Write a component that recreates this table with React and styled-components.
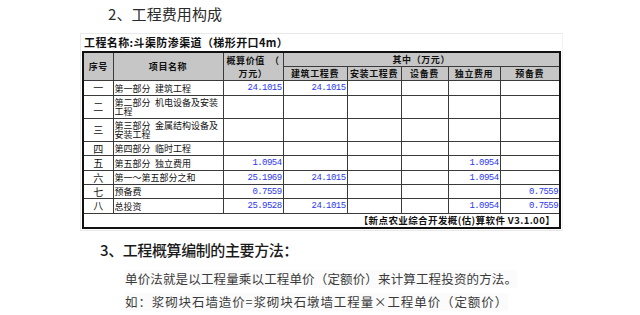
import React from "react"
import styled, { createGlobalStyle } from "styled-components"

const GlobalStyle = createGlobalStyle`
  body {
    margin: 0;
    background: #fff;
    font-family: "Noto Sans CJK SC", sans-serif;
  }
`

const _rows = [
  { no: "一", name: "第一部分\u2002建筑工程", total: "24.1015", build: "24.1015", h: 14 },
  { no: "二", name: "第二部分\u2002机电设备及安装工程", h: 22 },
  { no: "三", name: "第三部分\u2002金属结构设备及安装工程", h: 22 },
  { no: "四", name: "第四部分\u2002临时工程", h: 13 },
  { no: "五", name: "第五部分\u2002独立费用", total: "1.0954", indep: "1.0954", h: 14 },
  { no: "六", name: "第一～第五部分之和", total: "25.1969", build: "24.1015", indep: "1.0954", h: 13 },
  { no: "七", name: "预备费", total: "0.7559", reserve: "0.7559", h: 13 },
  { no: "八", name: "总投资", total: "25.9528", build: "24.1015", indep: "1.0954", reserve: "0.7559", h: 14 },
]

const _subHeads = ["建筑工程费", "安装工程费", "设备费", "独立费用", "预备费"]

const App = () => {
  return (
    <Page>
      <GlobalStyle />
      <SectionTitle>2、工程费用构成</SectionTitle>
      <Frame>
        <ProjectName>工程名称:斗渠防渗渠道（梯形开口4m）</ProjectName>
        <CostTable>
          <colgroup>
            <col style={{ width: 30 }} />
            <col style={{ width: 110 }} />
            <col style={{ width: 60 }} />
            <col style={{ width: 64 }} />
            <col style={{ width: 54 }} />
            <col style={{ width: 47 }} />
            <col style={{ width: 52 }} />
            <col style={{ width: 60 }} />
          </colgroup>
          <thead>
            <tr>
              <HeadCell rowSpan={2}>序号</HeadCell>
              <HeadCell rowSpan={2}>项目名称</HeadCell>
              <HeadCell rowSpan={2} $wrap>
                概算价值　（<br />万元）
              </HeadCell>
              <HeadCell colSpan={5} $h={13}>其中（万元）</HeadCell>
            </tr>
            <tr>
              {_subHeads.map((s, i) => (
                <HeadCell key={i} $h={13}>{s}</HeadCell>
              ))}
            </tr>
          </thead>
          <tbody>
            {_rows.map((r, i) => (
              <tr key={i}>
                <NoCell $h={r.h}>{r.no}</NoCell>
                <NameCell $h={r.h}>{r.name}</NameCell>
                <NumCell $h={r.h}>{r.total}</NumCell>
                <NumCell $h={r.h}>{r.build}</NumCell>
                <NumCell $h={r.h} />
                <NumCell $h={r.h} />
                <NumCell $h={r.h}>{r.indep}</NumCell>
                <NumCell $h={r.h}>{r.reserve}</NumCell>
              </tr>
            ))}
            <tr>
              <FooterCell colSpan={8}>【新点农业综合开发概(估)算软件 V3.1.00】</FooterCell>
            </tr>
          </tbody>
        </CostTable>
      </Frame>
      <MethodTitle>3、工程概算编制的主要方法：</MethodTitle>
      <Body>
        <BodyLine $spacing={0.15}>单价法就是以工程量乘以工程单价（定额价）来计算工程投资的方法。</BodyLine>
        <BodyLine $spacing={0.9}>如：浆砌块石墙造价=浆砌块石墩墙工程量×工程单价（定额价）</BodyLine>
      </Body>
    </Page>
  )
}

const Page = styled.div`
  width: 640px;
  height: 315px;
  display: flex;
  flex-direction: column;
  overflow: hidden;
`
const SectionTitle = styled.div`
  margin: 4px 0 0 108px;
  height: 29px;
  font-size: 15px;
  line-height: 20px;
  color: #2b2b2b;
  letter-spacing: 0.1px;
`
const Frame = styled.div`
  margin-left: 80px;
  width: 480px;
  border: 1px solid #e9e9e9;
  border-right-color: #f2f2f2;
  padding: 0 0 1px 1px;
  display: flex;
  flex-direction: column;
`
const ProjectName = styled.div`
  height: 17px;
  padding-left: 2px;
  font-size: 11px;
  line-height: 17px;
  font-weight: 700;
  letter-spacing: 0.4px;
  color: #111;
  white-space: nowrap;
`
const CostTable = styled.table`
  width: 477px;
  table-layout: fixed;
  border-collapse: collapse;
  border: 2px solid #111;
  font-size: 9px;
  color: #111;
`
const cellBase = `
  border: 1px solid #3a3a3a;
  padding: 0;
  overflow: hidden;
`
const HeadCell = styled.th`
  ${cellBase}
  height: ${p => (p.$h ? `${p.$h}px` : "auto")};
  background: #c6c6c6;
  font-weight: 700;
  font-size: 9px;
  line-height: ${p => (p.$wrap ? "13px" : "11px")};
  letter-spacing: 0.6px;
  text-align: center;
  white-space: nowrap;
`
const NoCell = styled.td`
  ${cellBase}
  height: ${p => p.$h}px;
  text-align: center;
  font-size: 10px;
  line-height: 10px;
`
const NameCell = styled.td`
  ${cellBase}
  height: ${p => p.$h}px;
  padding-left: 1px;
  font-size: 9px;
  line-height: 9px;
  text-align: left;
`
const NumCell = styled.td`
  ${cellBase}
  height: ${p => p.$h}px;
  padding-right: 1px;
  text-align: right;
  font-family: "Liberation Mono", monospace;
  font-size: 9px;
  letter-spacing: -0.55px;
  line-height: 10px;
  color: #2c36f0;
`
const FooterCell = styled.td`
  ${cellBase}
  height: 13px;
  padding-right: 4px;
  text-align: right;
  font-size: 9.5px;
  font-weight: 700;
  line-height: 11px;
  letter-spacing: 0.4px;
  white-space: nowrap;
`
const MethodTitle = styled.div`
  margin: 9px 0 0 100px;
  height: 20px;
  font-size: 15px;
  line-height: 20px;
  font-weight: 500;
  color: #1a1a1a;
  letter-spacing: -0.4px;
`
const Body = styled.div`
  margin: 10px 0 0 125px;
  display: flex;
  flex-direction: column;
  align-items: flex-start;
  gap: 5px;
`
const BodyLine = styled.div`
  font-size: 12.5px;
  line-height: 18px;
  color: #3a3a3a;
  letter-spacing: ${p => p.$spacing}px;
  white-space: nowrap;
  background: #fbfbfb;
`

export default App
